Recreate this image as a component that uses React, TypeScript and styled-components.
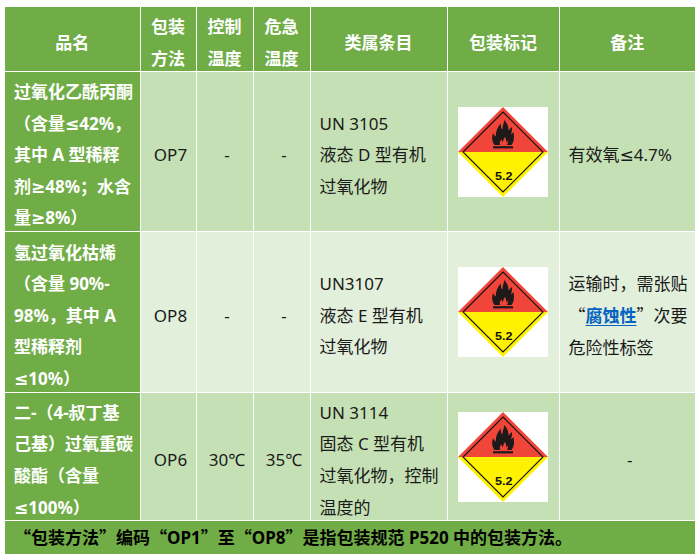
import React from "react";
import styled, { createGlobalStyle } from "styled-components";

const Global = createGlobalStyle`
  html, body { margin: 0; padding: 0; background: #ffffff; }
  body { font-family: "Noto Sans", "DejaVu Sans", "Noto Sans CJK SC", sans-serif; }
`;

const GREEN = "#70ad47";
const LIGHT = "#c5e0b4";
const PALE = "#e2efda";

const Page = styled.div`
  padding: 7px 5px;
`;

const Table = styled.table`
  border-collapse: collapse;
  table-layout: fixed;
  width: 690px;
  font-size: 17px;
`;

const Lines = styled.div`
  margin: 3.5px 0 -3.5px;
`;

const HeadCell = styled.th`
  background: ${GREEN};
  color: #ffffff;
  font-weight: 700;
  height: 64px;
  line-height: 32px;
  padding: 0 2px;
  border: 1px solid #ffffff;
  border-top: none;
  text-align: center;
  vertical-align: middle;
  white-space: nowrap;
  box-sizing: border-box;
`;

const NameCell = styled.td<{ $h: number }>`
  background: ${GREEN};
  color: #ffffff;
  font-weight: 700;
  height: ${(p) => p.$h}px;
  line-height: 31.6px;
  padding: 0 4px 0 9px;
  border: 1px solid #ffffff;
  border-left: none;
  text-align: left;
  vertical-align: middle;
  white-space: nowrap;
  box-sizing: border-box;
`;

const DataCell = styled.td<{ $bg: string; $center?: boolean }>`
  background: ${(p) => p.$bg};
  color: #1a1a1a;
  line-height: 31.6px;
  padding: 0 4px 0 9px;
  border: 1px solid #ffffff;
  text-align: ${(p) => (p.$center ? "center" : "left")};
  vertical-align: middle;
  white-space: nowrap;
  box-sizing: border-box;
`;

const PlacardCell = styled(DataCell)`
  padding: 0;
  text-align: center;
  line-height: 0;
`;

const FootCell = styled.td`
  background: ${GREEN};
  color: #000000;
  font-weight: 700;
  height: 33px;
  padding: 0 9px;
  border: 1px solid #ffffff;
  border-left: none;
  border-bottom: none;
  line-height: 30px;
  white-space: nowrap;
  box-sizing: border-box;
`;

const Q = styled.span`
  font-family: "Noto Sans CJK SC", sans-serif;
`;

const Link = styled.span`
  color: #0563c1;
  font-weight: 700;
  text-decoration: underline;
  text-underline-offset: 3px;
`;

const Svg = styled.svg`
  display: inline-block;
  vertical-align: middle;
`;

const Placard = () => (
  <Svg width="90" height="90" viewBox="0 0 90 90">
    <rect x="0" y="0" width="90" height="90" fill="#ffffff" />
    <polygon points="45,0 90,45 0,45" fill="#f0463a" />
    <polygon points="0,45 90,45 45,90" fill="#fff200" />
    <polygon
      points="45,5 85,45 45,85 5,45"
      fill="none"
      stroke="#111111"
      strokeWidth="1.1"
    />
    <path
      d="M36.5 38 C34 35 33.5 30.5 35 26 C35.8 28 36.8 29 37.8 29.5 C37.5 24.5 39.5 20 43 16.5 C42.7 19.5 43.2 21.5 44.2 22.5 C44.8 18.5 46 15.5 46.3 13 C49.5 16.5 51 20.5 50.3 24 C51.3 22.3 52.5 21 54 20 C54.2 23 53.7 25.5 53 27.5 C54 26.8 54.8 26 55.3 25 C56.8 30 56 34.8 53.5 38 Z"
      fill="#1e1a1a"
    />
    <path
      d="M42.3 38 C41.3 36 41.8 34 43.5 32.2 C43.6 33.8 44.2 34.6 45 35 C45.2 33 46 31.2 47 30 C48 32.2 48.6 34 48.2 35.6 C48.8 35 49.3 34.3 49.6 33.5 C50.3 35.3 49.8 37 48.6 38 Z"
      fill="#f0463a"
    />
    <rect x="35" y="39.2" width="20" height="2.2" fill="#1e1a1a" />
    <text
      x="37"
      y="73.3"
      textLength="17.5"
      lengthAdjust="spacingAndGlyphs"
      fontFamily="'Liberation Sans', Arial, sans-serif"
      fontWeight="700"
      fontSize="10"
      fill="#111111"
    >
      5.2
    </text>
  </Svg>
);

export default function App() {
  return (
    <Page>
      <Global />
      <Table>
        <colgroup>
          <col style={{ width: 135 }} />
          <col style={{ width: 56 }} />
          <col style={{ width: 57 }} />
          <col style={{ width: 57 }} />
          <col style={{ width: 137 }} />
          <col style={{ width: 112 }} />
          <col style={{ width: 136 }} />
        </colgroup>
        <thead>
          <tr>
            <HeadCell style={{ borderLeft: "none" }}>
              <Lines>品名</Lines>
            </HeadCell>
            <HeadCell>
              <Lines>
                包装
                <br />
                方法
              </Lines>
            </HeadCell>
            <HeadCell>
              <Lines>
                控制
                <br />
                温度
              </Lines>
            </HeadCell>
            <HeadCell>
              <Lines>
                危急
                <br />
                温度
              </Lines>
            </HeadCell>
            <HeadCell>
              <Lines>类属条目</Lines>
            </HeadCell>
            <HeadCell>
              <Lines>包装标记</Lines>
            </HeadCell>
            <HeadCell style={{ borderRight: "none" }}>
              <Lines>备注</Lines>
            </HeadCell>
          </tr>
        </thead>
        <tbody>
          <tr>
            <NameCell $h={160}>
              <Lines>
                过氧化乙酰丙酮
                <br />
                （含量≤42%，
                <br />
                其中 A 型稀释
                <br />
                剂≥48%；水含
                <br />
                量≥8%）
              </Lines>
            </NameCell>
            <DataCell $bg={LIGHT} $center>
              <Lines>OP7</Lines>
            </DataCell>
            <DataCell $bg={LIGHT} $center>
              <Lines>-</Lines>
            </DataCell>
            <DataCell $bg={LIGHT} $center>
              <Lines>-</Lines>
            </DataCell>
            <DataCell $bg={LIGHT}>
              <Lines>
                UN 3105
                <br />
                液态 D 型有机
                <br />
                过氧化物
              </Lines>
            </DataCell>
            <PlacardCell $bg={LIGHT}>
              <Placard />
            </PlacardCell>
            <DataCell $bg={LIGHT} style={{ borderRight: "none" }}>
              <Lines>有效氧≤4.7%</Lines>
            </DataCell>
          </tr>
          <tr>
            <NameCell $h={161}>
              <Lines>
                氢过氧化枯烯
                <br />
                （含量 90%-
                <br />
                98%，其中 A
                <br />
                型稀释剂
                <br />
                ≤10%）
              </Lines>
            </NameCell>
            <DataCell $bg={PALE} $center>
              <Lines>OP8</Lines>
            </DataCell>
            <DataCell $bg={PALE} $center>
              <Lines>-</Lines>
            </DataCell>
            <DataCell $bg={PALE} $center>
              <Lines>-</Lines>
            </DataCell>
            <DataCell $bg={PALE}>
              <Lines>
                UN3107
                <br />
                液态 E 型有机
                <br />
                过氧化物
              </Lines>
            </DataCell>
            <PlacardCell $bg={PALE}>
              <Placard />
            </PlacardCell>
            <DataCell $bg={PALE} style={{ borderRight: "none" }}>
              <Lines>
                运输时，需张贴
                <br />
                <Q>“</Q>
                <Link>腐蚀性</Link>
                <Q>”</Q>次要
                <br />
                危险性标签
              </Lines>
            </DataCell>
          </tr>
          <tr>
            <NameCell $h={128}>
              <Lines>
                二-（4-叔丁基
                <br />
                己基）过氧重碳
                <br />
                酸酯（含量
                <br />
                ≤100%）
              </Lines>
            </NameCell>
            <DataCell $bg={LIGHT} $center>
              <Lines>OP6</Lines>
            </DataCell>
            <DataCell $bg={LIGHT} $center>
              <Lines>30℃</Lines>
            </DataCell>
            <DataCell $bg={LIGHT} $center>
              <Lines>35℃</Lines>
            </DataCell>
            <DataCell $bg={LIGHT}>
              <Lines>
                UN 3114
                <br />
                固态 C 型有机
                <br />
                过氧化物，控制
                <br />
                温度的
              </Lines>
            </DataCell>
            <PlacardCell $bg={LIGHT}>
              <Placard />
            </PlacardCell>
            <DataCell $bg={LIGHT} $center style={{ borderRight: "none" }}>
              <Lines>-</Lines>
            </DataCell>
          </tr>
          <tr>
            <FootCell colSpan={7}>
              <Q>“</Q>包装方法<Q>”</Q>编码<Q>“</Q>OP1<Q>”</Q>至<Q>“</Q>OP8
              <Q>”</Q>是指包装规范 P520 中的包装方法。
            </FootCell>
          </tr>
        </tbody>
      </Table>
    </Page>
  );
}
